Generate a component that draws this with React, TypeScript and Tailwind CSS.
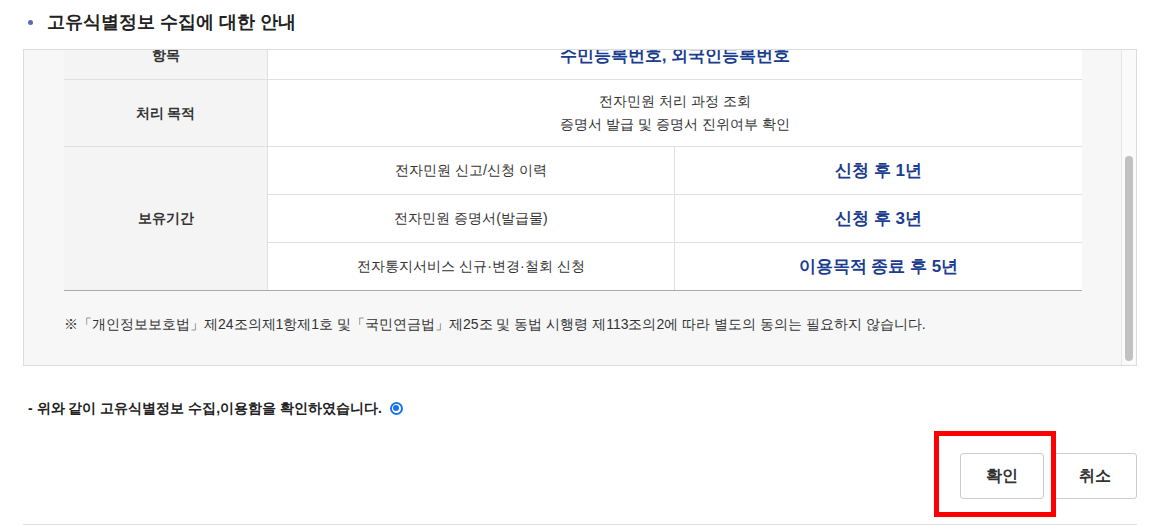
import React from "react";

const BLUE = "text-[#1b3d8f]";

export default function App() {
  return (
    <div className="w-[1157px] h-[526px] bg-white overflow-hidden pl-[23px] pr-[20px] font-[sans-serif] text-[#333]">
      {/* Title */}
      <div className="h-[49px] pt-[9px]">
        <div className="flex items-center h-[26px]">
          <span className="ml-[5px] w-[5px] h-[5px] rounded-full bg-[#5a6db3]" />
          <h2 className="ml-[14px] text-[18px] font-bold text-[#222] leading-[26px]">
            고유식별정보 수집에 대한 안내
          </h2>
        </div>
      </div>

      {/* Scroll box */}
      <div className="h-[317px] border border-[#dcdcdc] bg-[#f7f7f7] flex">
        <div className="flex-1 overflow-hidden pl-[40px] pr-[39px]">
          <div className="mt-[-18px]">
            {/* Row 1 */}
            <div className="flex h-[48px] border-b border-[#e0e0e0] bg-white">
              <div className="w-[204px] bg-[#f4f4f4] border-r border-[#e0e0e0] flex items-center justify-center text-[14px] font-bold">
                항목
              </div>
              <div className={`flex-1 flex items-center justify-center text-[17px] font-bold ${BLUE}`}>
                수민등록번호, 외국인등록번호
              </div>
            </div>
            {/* Row 2 */}
            <div className="flex h-[67px] border-b border-[#e0e0e0] bg-white">
              <div className="w-[204px] bg-[#f4f4f4] border-r border-[#e0e0e0] flex items-center justify-center text-[14px] font-bold">
                처리 목적
              </div>
              <div className="flex-1 flex flex-col items-center justify-center text-[14px] leading-[23px] text-[#333]">
                <span>전자민원 처리 과정 조회</span>
                <span>증명서 발급 및 증명서 진위여부 확인</span>
              </div>
            </div>
            {/* Row group */}
            <div className="flex border-b border-[#aaaaaa] bg-white">
              <div className="w-[204px] bg-[#f4f4f4] border-r border-[#e0e0e0] flex items-center justify-center text-[14px] font-bold">
                보유기간
              </div>
              <div className="flex-1 flex flex-col">
                <div className="flex h-[48px] border-b border-[#e0e0e0]">
                  <div className="w-[407px] border-r border-[#e0e0e0] flex items-center justify-center text-[14px]">
                    전자민원 신고/신청 이력
                  </div>
                  <div className={`flex-1 flex items-center justify-center text-[17px] font-bold ${BLUE}`}>
                    신청 후 1년
                  </div>
                </div>
                <div className="flex h-[48px] border-b border-[#e0e0e0]">
                  <div className="w-[407px] border-r border-[#e0e0e0] flex items-center justify-center text-[14px]">
                    전자민원 증명서(발급물)
                  </div>
                  <div className={`flex-1 flex items-center justify-center text-[17px] font-bold ${BLUE}`}>
                    신청 후 3년
                  </div>
                </div>
                <div className="flex h-[47px]">
                  <div className="w-[407px] border-r border-[#e0e0e0] flex items-center justify-center text-[14px]">
                    전자통지서비스 신규·변경·철회 신청
                  </div>
                  <div className={`flex-1 flex items-center justify-center text-[17px] font-bold ${BLUE}`}>
                    이용목적 종료 후 5년
                  </div>
                </div>
              </div>
            </div>
            {/* Note */}
            <p className="pt-[22px] text-[14px] leading-[22px] text-[#333]">
              ※「개인정보보호법」제24조의제1항제1호 및「국민연금법」제25조 및 동법 시행령 제113조의2에 따라 별도의 동의는 필요하지 않습니다.
            </p>
          </div>
        </div>
        {/* Scrollbar */}
        <div className="w-[15px] border-l border-[#e6e6e6] bg-[#fafafa] pt-[106px] flex justify-center">
          <div className="w-[8px] h-[205px] rounded-full bg-[#c1c1c1]" />
        </div>
      </div>

      {/* Confirm line */}
      <div className="mt-[32px] h-[20px] flex items-center pl-[5px] text-[14px] font-bold text-[#222]">
        <span>- 위와 같이 고유식별정보 수집,이용함을 확인하였습니다.</span>
        <span className="ml-[8px] w-[13px] h-[13px] rounded-full border-2 border-[#1a73e8] flex items-center justify-center bg-white">
          <span className="w-[6px] h-[6px] rounded-full bg-[#1a73e8]" />
        </span>
      </div>

      {/* Buttons */}
      <div className="mt-[35px] flex justify-end gap-[8px]">
        <div className="relative">
          <button className="w-[84px] h-[46px] border border-[#cccccc] rounded-[3px] bg-white text-[16px] font-bold text-[#333]">
            확인
          </button>
          <span className="absolute left-[-26px] top-[-22px] w-[122px] h-[86px] border-[5px] border-[#ff0000] pointer-events-none" />
        </div>
        <button className="w-[85px] h-[46px] border border-[#cccccc] rounded-[3px] bg-white text-[16px] font-bold text-[#333]">
          취소
        </button>
      </div>

      <div className="mt-[25px] border-t border-[#dddddd]" />
    </div>
  );
}
